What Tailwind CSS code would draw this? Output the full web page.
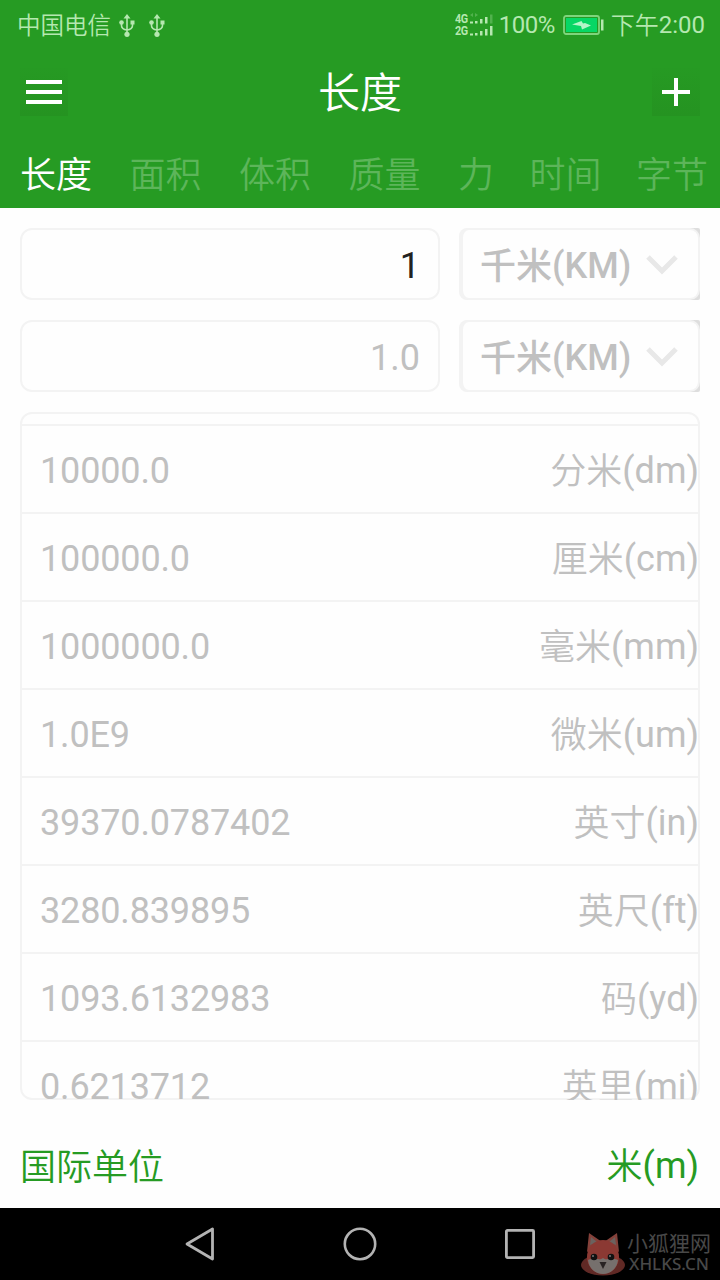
<!DOCTYPE html>
<html lang="zh-CN">
<head>
  <meta charset="UTF-8" />
  <meta name="viewport" content="width=device-width, initial-scale=1.0"/>
  <title>长度</title>
  <script src="https://cdn.jsdelivr.net/npm/@tailwindcss/browser@4"></script>
</head>
<body class="bg-[#fefefe] w-[720px] h-[1280px] overflow-hidden flex flex-col font-[Roboto,'Noto_Sans_CJK_SC',sans-serif] text-[#c0c0c0]">

  <header class="bg-[#269b23] h-52 shrink-0 flex flex-col text-white">
    <!-- Status bar -->
    <div class="h-12 pt-0.5 flex items-center text-[#b5e8b0] text-[25px] leading-none">
      <span class="ml-[17px] pt-1 text-[23.5px] font-[350]">中国电信</span>
      <svg class="ml-[8px] w-4 h-[23px]" viewBox="0 0 16 23" fill="none" stroke="currentColor" stroke-width="1.6">
        <path d="M8 3v17M2.5 8v3.5c0 3 2 4 5.500 4.500M13.500 8v3.500c0 3-2 4-5.500 4.500"/>
        <path d="M8 0l3.500 4.500h-7zM11.500 6.500h4v4h-4z" fill="currentColor" stroke="none"/>
        <circle cx="2.500" cy="8.500" r="2.300" fill="currentColor" stroke="none"/>
        <circle cx="8" cy="20.300" r="2.600" fill="currentColor" stroke="none"/>
      </svg>
      <svg class="ml-[14px] w-4 h-[23px]" viewBox="0 0 16 23" fill="none" stroke="currentColor" stroke-width="1.6">
        <path d="M8 3v17M2.500 8v3.500c0 3 2 4 5.500 4.500M13.500 8v3.500c0 3-2 4-5.500 4.500"/>
        <path d="M8 0l3.500 4.500h-7zM11.500 6.500h4v4h-4z" fill="currentColor" stroke="none"/>
        <circle cx="2.500" cy="8.500" r="2.300" fill="currentColor" stroke="none"/>
        <circle cx="8" cy="20.300" r="2.600" fill="currentColor" stroke="none"/>
      </svg>
      <div class="ml-auto flex items-center">
        <div class="w-[13px] flex flex-col text-[12px] leading-[12px] font-bold tracking-tighter">
          <span class="origin-left scale-x-90">4G</span>
          <span class="origin-left scale-x-90">2G</span>
        </div>
        <svg class="ml-0.5 w-6 h-6" viewBox="0 0 24 24" fill="currentColor">
          <path d="M0 8.500h3v2H0zM5 8h2.500v2.500H5zM10 6h2.500v4.500H10zM15 4h2.500v6.500H15z"/>
          <path d="M20 1.500h2.500v9H20zM0 2l3-2v4zM8 2L5 0v4z" opacity=".3"/>
          <path d="M0 20.500h3v2H0zM5 20h2.500v2.500H5zM10 18h2.500v4.500H10zM15 16h2.500v6.500H15zM20 13h2.500v9.500H20z"/>
        </svg>
        <span class="ml-[5px] text-[24px] tracking-[-0.500px]">100%</span>
        <svg class="ml-[8px] w-[42px] h-5" viewBox="0 0 42 20">
          <rect x="1" y="1" width="35" height="18" rx="2" fill="none" stroke="#7fd47c" stroke-width="1.800"/>
          <rect x="3" y="3" width="31" height="14" fill="#07d765"/>
          <path d="M9 9.500L18.500 6l1.500 2.500L22 8l6 2.500-9 4-1-3.500z" fill="#b5f5c8"/>
          <path d="M38 4.500h2.500v11H38z" fill="#b5e8b0"/>
        </svg>
        <span class="ml-[6px] mr-[15px] text-[24px]"><span class="font-[350] align-[-1px]">下午</span>2:00</span>
      </div>
    </div>

    <!-- Title bar -->
    <div class="h-[88px] px-5 flex items-center justify-between">
      <button class="size-12 bg-linear-to-b from-[#269a23] to-[#259321] flex items-center justify-center">
        <svg class="w-9 h-6" viewBox="0 0 36 24" fill="white"><path d="M0 0h36v4H0zM0 10h36v4H0zM0 20h36v4H0z"/></svg>
      </button>
      <h1 class="pt-[3px] text-[42px] leading-none font-[350]">长度</h1>
      <button class="size-12 bg-linear-to-b from-[#269a23] to-[#259321] flex items-center justify-center">
        <svg class="size-7" viewBox="0 0 28 28" fill="white"><path d="M12 0h4v12h12v4H16v12h-4V16H0v-4h12z"/></svg>
      </button>
    </div>

    <!-- Category tabs -->
    <nav class="h-[72px] pl-5 pt-[7px] flex items-center gap-[37.500px] text-4xl leading-none font-[350] text-[#5db55a] whitespace-nowrap">
      <a class="text-white">长度</a>
      <a>面积</a>
      <a>体积</a>
      <a>质量</a>
      <a>力</a>
      <a class="-ml-[2px]">时间</a>
      <a class="-ml-[3px]">字节</a>
    </nav>
  </header>

  <main class="flex-1 px-5 pt-5 flex flex-col text-4xl leading-none">
    <div class="flex gap-[19px]">
      <div class="w-[420px] h-[72px] border-2 border-[#f3f3f3] rounded-xl px-[18px] pt-1 flex items-center justify-end text-[#222]">1</div>
      <div class="flex-1 h-[72px] rounded-l-lg rounded-r-xs bg-linear-to-r from-[#f3f3f3] to-[#dedede]">
        <div class="h-full bg-[#fefefe] border-2 border-l-4 border-[#f3f3f3] rounded-[10px] pl-[17px] pr-5 flex items-center justify-between font-medium">
          <span class="pt-1"><span class="align-[-1px]">千米</span>(KM)</span>
          <svg class="mt-0.5 w-8 h-5" viewBox="0 0 32 20" fill="none" stroke="#e8e8e8" stroke-width="5"><path d="M2 2l14 14L30 2"/></svg>
        </div>
      </div>
    </div>
    <div class="mt-5 flex gap-[19px]">
      <div class="w-[420px] h-[72px] border-2 border-[#f3f3f3] rounded-xl px-[18px] pt-1 flex items-center justify-end">1.0</div>
      <div class="flex-1 h-[72px] rounded-l-lg rounded-r-xs bg-linear-to-r from-[#f3f3f3] to-[#dedede]">
        <div class="h-full bg-[#fefefe] border-2 border-l-4 border-[#f3f3f3] rounded-[10px] pl-[17px] pr-5 flex items-center justify-between font-medium">
          <span class="pt-1"><span class="align-[-1px]">千米</span>(KM)</span>
          <svg class="mt-0.5 w-8 h-5" viewBox="0 0 32 20" fill="none" stroke="#e8e8e8" stroke-width="5"><path d="M2 2l14 14L30 2"/></svg>
        </div>
      </div>
    </div>

    <!-- Conversion list -->
    <div class="mt-5 h-[688px] border-2 border-[#f3f3f3] rounded-xl">
      <ul class="-mr-px h-[686px] pt-2.5 overflow-hidden tracking-[-0.150px] *:h-[88px] *:border-t-2 *:border-[#f3f3f3] *:pl-[18px] *:pt-1 *:flex *:items-center *:justify-between">
        <li><span>10000.0</span><span class="tracking-normal"><span class="font-[350] align-[-1px]">分米</span>(dm)</span></li>
        <li><span>100000.0</span><span class="tracking-normal"><span class="font-[350] align-[-1px]">厘米</span>(cm)</span></li>
        <li><span>1000000.0</span><span class="tracking-normal"><span class="font-[350] align-[-1px]">毫米</span>(mm)</span></li>
        <li><span>1.0E9</span><span class="tracking-normal"><span class="font-[350] align-[-1px]">微米</span>(um)</span></li>
        <li><span>39370.0787402</span><span class="tracking-normal"><span class="font-[350] align-[-1px]">英寸</span>(in)</span></li>
        <li><span>3280.839895</span><span class="tracking-normal"><span class="font-[350] align-[-1px]">英尺</span>(ft)</span></li>
        <li><span>1093.6132983</span><span class="tracking-normal"><span class="font-[350] align-[-1px]">码</span>(yd)</span></li>
        <li><span>0.6213712</span><span class="tracking-normal"><span class="font-[350] align-[-1px]">英里</span>(mi)</span></li>
      </ul>
    </div>

    <div class="flex-1 pt-[25px] pr-px flex items-center justify-between text-[#269b23]">
      <span class="font-[350] pt-0.5">国际单位</span>
      <span><span class="font-[350] align-[-1px]">米</span>(m)</span>
    </div>
  </main>

  <!-- Navigation bar -->
  <footer class="relative bg-black h-[72px] shrink-0 px-[184px] flex items-center justify-between">
    <svg class="w-8 h-9" viewBox="0 0 32 36" fill="none" stroke="#b3b3b3" stroke-width="2.800" stroke-linejoin="round"><path d="M28.500 3v30L3 18z"/></svg>
    <svg class="size-9" viewBox="0 0 36 36" fill="none" stroke="#b3b3b3" stroke-width="2.600"><circle cx="18" cy="18" r="15.200"/></svg>
    <svg class="size-8" viewBox="0 0 32 32" fill="none" stroke="#b3b3b3" stroke-width="2.800"><rect x="2.400" y="2.400" width="27.200" height="27.200" rx="1"/></svg>

    <!-- Watermark -->
    <div class="absolute left-[580px] top-6 flex text-[#484848]">
      <svg class="w-[46px] h-12" viewBox="0 0 46 48">
        <ellipse cx="23" cy="33" rx="22" ry="10.500" fill="#602925"/>
        <path d="M7 20L9 1l13 9zM39 20L37 1l-13 9z" fill="#84413a"/>
        <path d="M10 13l1-8 6 5zM36 13l-1-8-6 5z" fill="#6b625f"/>
        <ellipse cx="23" cy="25" rx="16" ry="17" fill="#8b3933"/>
        <path d="M8 28c8-3 11 1 15-2 4 3 7-1 15 2-1 9-8 14-15 14S9 37 8 28z" fill="#76706d"/>
        <circle cx="14" cy="25" r="3.300" fill="#111"/>
        <circle cx="31" cy="25" r="3.300" fill="#111"/>
        <circle cx="13" cy="24" r="1" fill="#777"/>
        <circle cx="30" cy="24" r="1" fill="#777"/>
        <path d="M19.500 30h7L23 37z" fill="#292323"/>
      </svg>
      <div class="ml-[1px] flex flex-col whitespace-nowrap">
        <span class="text-[21px] leading-[25px]">小狐狸网</span>
        <span class="ml-[2px] text-[17px] leading-[14px] font-medium font-['Noto_Sans',sans-serif]">XHLKS.CN</span>
      </div>
    </div>
  </footer>

</body>
</html>
